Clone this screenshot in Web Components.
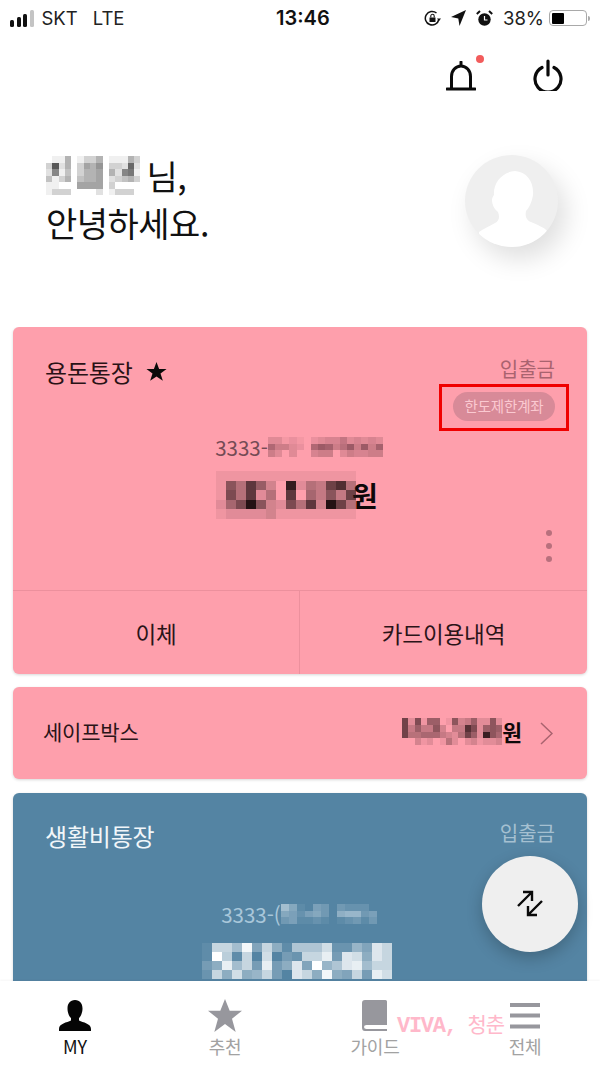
<!DOCTYPE html>
<html lang="ko">
<head>
<meta charset="utf-8">
<title>MY</title>
<style>
html, body { margin: 0; padding: 0; background: #fff; }
body { font-family: "Noto Sans CJK KR", "Noto Sans", sans-serif; color: #111; }
</style>
</head>
<body>
<app-shell>
  <status-bar></status-bar>
  <top-actions></top-actions>
  <greeting-panel>
    <mosaic-block cell-w="6.3" cell-h="6.5" ink="#1c1c1c"
      data="011501335011153/3b25036570332a2/281403556052891/413504556023453/110006666030000/133300002013330"></mosaic-block>
  </greeting-panel>

  <card-list>
    <account-card style="--card-bg:#fe9fac;--title:#2a1216;--kind:#a9636f;--number:#754b55;--line:rgba(130,60,70,.14);--dots:#b8707d">
      <span slot="title">용돈통장</span>
      <svg slot="title-icon" width="21" height="20" viewBox="0 0 24 23"><path d="M12 0l3 8h8.600l-7 5.200 2.700 8.400L12 16.600l-7.300 5 2.700-8.400-7-5.200H9z" fill="#0a0a0a"/></svg>
      <span slot="kind">입출금</span>
      <limit-chip slot="chip">한도제한계좌</limit-chip>
      <span slot="number">3333-</span>
      <mosaic-block slot="number-mask" cell-w="7.2" cell-h="6.7" ink="#6b3843"
        data="3312102344634343/8553208a957a5a59/5303004550354455"></mosaic-block>
      <mosaic-block slot="balance-mask" cell-w="10" cell-h="9.6" ink="#241214"
        data="11111111111111/185b730e254ac5/195b250b06484a/269f83295b3fa5/12222311111111"></mosaic-block>
      <span slot="won">원</span>
      <card-action slot="actions" divider>이체</card-action>
      <card-action slot="actions">카드이용내역</card-action>
    </account-card>

    <save-box>
      <span slot="label">세이프박스</span>
      <mosaic-block slot="mask" cell-w="6.25" cell-h="6.7" ink="#2c1418"
        data="a291770183472282/a474483044c92787/a556664325a72e86/0031201520231223"></mosaic-block>
    </save-box>

    <account-card compact style="--card-bg:#5484a3;--title:#f1f6f9;--kind:#a5c0d1;--number:#a9c7da;--line:transparent;--dots:transparent;margin-top:1px">
      <span slot="title">생활비통장</span>
      <span slot="kind">입출금</span>
      <span slot="number">3333-(</span>
      <mosaic-block slot="number-mask" cell-w="8" cell-h="6.7" ink="#e8f1f6"
        data="851043032220/542453067734/341121012313"></mosaic-block>
      <mosaic-block slot="balance-mask" cell-w="10" cell-h="9" ink="#ffffff"
        data="1aa7e4a51888b2264ca/1f91a0b032aad3cb5ca/35d7a3d35c4f68cd7aa/2a5b56a30ca5e54a3db"></mosaic-block>
    </account-card>
  </card-list>

  <swap-fab></swap-fab>
  <water-mark></water-mark>

  <tab-bar>
    <tab-item active label="MY">
      <svg width="34" height="31" viewBox="0 0 34 31"><path d="M17 0c5 0 7.500 3.600 7.500 8.500 0 4-1.700 8-3.500 9.500v2.600c4 2 12 3 12 8.400v2H1v-2c0-5.400 8-6.400 12-8.400V18c-1.800-1.500-3.500-5.500-3.500-9.500C9.500 3.600 12 0 17 0z" fill="#050505"/></svg>
    </tab-item>
    <tab-item label="추천">
      <svg width="34" height="33" viewBox="0 0 34 33"><path d="M17 0l4.700 11.800H34l-10 7.900L27.700 33 17 25 6.300 33 10 19.700 0 11.800h12.300z" fill="#97979d"/></svg>
    </tab-item>
    <tab-item label="가이드">
      <svg width="26" height="31" viewBox="0 0 26 31"><path d="M3 0h20.500q1.500 0 1.500 1.500V25H4.500Q2 25 2 27t2.500 2H25v2H3q-3 0-3-3.500V3q0-3 3-3z" fill="#97979d"/></svg>
    </tab-item>
    <tab-item label="전체">
      <svg width="30" height="26" viewBox="0 0 30 26"><path d="M0 0h30v4H0zM0 10.500h30v4H0zM0 21.500h30v4H0z" fill="#97979d"/></svg>
    </tab-item>
  </tab-bar>
</app-shell>

<script>
function define(name, html, extra) {
    const template = document.createElement('template');
    template.innerHTML = html;
    customElements.define(name, class extends HTMLElement {
        constructor() {
            super();
            this.attachShadow({ mode: 'open' }).appendChild(template.content.cloneNode(true));
        }
        connectedCallback() {
            if (extra) extra.call(this);
        }
    });
}

define('app-shell', `
<style>
:host { display: flex; flex-direction: column; position: relative; width: 600px; height: 1068px; overflow: hidden; background: #fff; }
</style>
<slot></slot>`);

define('status-bar', `
<style>
:host { display: flex; align-items: center; height: 36px; padding: 0 10px; box-sizing: border-box; font: 400 18.500px Inter, "Liberation Sans", sans-serif; color: #222; position: relative; flex: none; }
.signal { display: flex; align-items: flex-end; gap: 2.500px; height: 18px; margin-right: 8px; }
.signal i { display: block; width: 4px; border-radius: 1.500px; background: #111; }
.lte { margin-left: 15px; }
.time { position: absolute; left: 276px; font-weight: 600; font-size: 20px; color: #111; }
.right { margin-left: auto; display: flex; align-items: center; }
.pct { margin: 0 5px 0 10px; }
.battery { display: flex; width: 38px; height: 16px; box-sizing: border-box; border: 1.500px solid #a9a9a9; border-radius: 4px; padding: 1.500px; }
.battery i { display: block; width: 12px; background: #000; border-radius: 1px; }
.nub { width: 2px; height: 5px; margin-left: 1px; background: #aaa; border-radius: 0 2px 2px 0; }
</style>
<div class="signal"><i style="height:7px"></i><i style="height:10px"></i><i style="height:13px"></i><i style="height:17px;background:#c4c4c4"></i></div>
<span>SKT</span><span class="lte">LTE</span>
<span class="time">13:46</span>
<div class="right">
  <svg width="17" height="17" viewBox="0 0 17 17" style="margin-right:10px"><path d="M14.800 9.500A6.800 6.800 0 1 1 12.500 3" fill="none" stroke="#111" stroke-width="1.500"/><path d="M13 8.500l2 2.500 2-2.500z" fill="#111"/><rect x="5.500" y="7.500" width="6" height="4.500" fill="#111"/><path d="M6.800 7.500V6a1.700 1.700 0 0 1 3.400 0v1.500" fill="none" stroke="#111" stroke-width="1.100"/></svg>
  <svg width="15" height="16" viewBox="0 0 15 16" style="margin-right:10px"><path d="M15 0L8.500 16 7.300 8.500 0 7z" fill="#111"/></svg>
  <svg width="17" height="17" viewBox="0 0 17 17"><circle cx="8.500" cy="9.500" r="6.200" fill="#111"/><path d="M8.500 6v4h3" fill="none" stroke="#fff" stroke-width="1.200"/><path d="M.8 4L4 1M16.200 4L13 1" stroke="#111" stroke-width="2"/></svg>
  <span class="pct">38%</span>
  <div class="battery"><i></i></div><div class="nub"></div>
</div>`);

define('top-actions', `
<style>
:host { display: flex; align-items: center; justify-content: flex-end; height: 80px; flex: none; }
.bell { position: relative; display: flex; margin-right: 57px; }
.dot { position: absolute; left: 30px; top: -6px; width: 8px; height: 8px; border-radius: 50%; background: #f25c5c; }
.power { display: flex; margin: 0 37px 2px 0; }
</style>
<div class="bell">
  <svg width="30" height="30" viewBox="0 0 30 30"><path d="M1 28h28M5.500 28V15.500a9.500 10.500 0 0 1 19 0V28M15 5V1" fill="none" stroke="#0a0a0a" stroke-width="3" stroke-linecap="round"/></svg>
  <span class="dot"></span>
</div>
<div class="power">
  <svg width="30" height="32" viewBox="0 0 30 32"><path d="M9 8.500a13 13 0 1 0 12 0" fill="none" stroke="#0a0a0a" stroke-width="3.200" stroke-linecap="round"/><path d="M15 2v14" stroke="#0a0a0a" stroke-width="3.200" stroke-linecap="round"/></svg>
</div>`);

define('greeting-panel', `
<style>
:host { display: flex; justify-content: space-between; height: 211px; padding: 39px 42px 0 46px; box-sizing: border-box; flex: none; }
.text { font-size: 34px; line-height: 47px; font-weight: 400; color: #111; letter-spacing: -.5px; margin-top: -3px; }
.line { display: flex; align-items: center; height: 47px; }
.line span { margin-left: 6px; }
.avatar { width: 93px; height: 92px; border-radius: 50%; background: #efefef; box-shadow: 8px 12px 26px rgba(0,0,0,.13); overflow: hidden; flex: none; }
.avatar svg { display: block; }
</style>
<div class="text">
  <div class="line"><slot></slot><span>님,</span></div>
  <div>안녕하세요.</div>
</div>
<div class="avatar">
  <svg width="93" height="92" viewBox="0 0 93 92"><path d="M50 16c12 1 19 11 18 24-1 7-4 13-7 16-1 5 0 9 5 11 6 3 13 5 16 9v16H14V77c4-3 11-6 16-9 4-2 5-6 3-11-4-3-6-8-6-12 0-2 1-4 2-5-1-12 8-23 21-24z" fill="#fff"/></svg>
</div>`);

define('card-list', `
<style>
:host { display: flex; flex-direction: column; gap: 13px; flex: 1 1 0; min-height: 0; overflow: hidden; padding: 0 13px; }
</style>
<slot></slot>`);

define('account-card', `
<style>
:host { display: block; position: relative; flex: none; height: 347px; background: var(--card-bg); border-radius: 6px; box-shadow: 0 1px 3px rgba(0,0,0,.16); }
:host([compact]) { height: 240px; }
.head { display: flex; justify-content: space-between; padding: 26px 32px 0 32px; }
:host([compact]) .head { padding-top: 24px; }
.title { display: flex; align-items: center; gap: 13px; font-size: 24px; line-height: 38px; color: var(--title); letter-spacing: -.2px; }
.kind { text-align: right; font-size: 20px; line-height: 32px; color: var(--kind); }
.chip { display: flex; justify-content: flex-end; height: 29px; margin-top: 1px; padding-right: 32px; }
.number { display: flex; justify-content: center; align-items: center; height: 30px; margin-top: 11px; padding-right: 2px; font-size: 20.500px; color: var(--number); }
:host([compact]) .number { margin-top: 14px; }
.balance { display: flex; justify-content: center; align-items: center; height: 56px; margin-top: 5px; padding-right: 6px; }
:host([compact]) .balance { align-items: flex-start; margin-top: 14px; height: 36px; }
::slotted([slot=won]) { font-size: 28px; font-weight: 700; color: #0e0809; margin-left: -4px; }
.dots { position: absolute; right: 35px; top: 203px; display: flex; flex-direction: column; gap: 7px; }
.dots i { width: 6px; height: 6px; border-radius: 50%; background: var(--dots); }
.actions { display: flex; box-sizing: border-box; height: 84px; margin-top: 67px; border-top: 1px solid var(--line); }
:host([compact]) .actions { display: none; }
</style>
<div class="head">
  <div class="title"><slot name="title"></slot><slot name="title-icon"></slot></div>
  <div class="kind"><slot name="kind"></slot></div>
</div>
<div class="chip"><slot name="chip"></slot></div>
<div class="number"><slot name="number"></slot><slot name="number-mask"></slot></div>
<div class="balance"><slot name="balance-mask"></slot><slot name="won"></slot></div>
<div class="dots"><i></i><i></i><i></i></div>
<div class="actions"><slot name="actions"></slot></div>`);

define('limit-chip', `
<style>
:host { display: block; position: relative; }
.pill { height: 29px; line-height: 28px; border-radius: 15px; background: #d88a98; color: #fbc9d1; font-size: 14.500px; white-space: nowrap; box-sizing: border-box; width: 102px; text-align: center; letter-spacing: -.2px; }
.mark { position: absolute; left: -14px; right: -14px; top: -8px; bottom: -10px; border: 3px solid #f00000; box-sizing: border-box; }
</style>
<div class="pill"><slot></slot></div>
<div class="mark"></div>`);

define('card-action', `
<style>
:host { display: flex; flex: 1 1 0; align-items: center; justify-content: center; font-size: 22.500px; color: #2a1418; box-sizing: border-box; letter-spacing: -.1px; }
:host([divider]) { flex: 0 0 287px; border-right: 1px solid var(--line); }
</style>
<slot></slot>`);

define('save-box', `
<style>
:host { display: flex; align-items: center; flex: none; height: 92px; padding: 0 34px 0 30px; box-sizing: border-box; background: #fe9fac; border-radius: 6px; box-shadow: 0 1px 3px rgba(0,0,0,.16); }
.label { font-size: 21px; color: #2a1418; letter-spacing: -.2px; margin-bottom: 4px; }
.amount { margin-left: auto; display: flex; align-items: center; margin-bottom: 3px; }
.won { font-size: 21.500px; font-weight: 700; color: #0e0809; }
svg { margin-left: 18px; }
</style>
<span class="label"><slot name="label"></slot></span>
<div class="amount"><slot name="mask"></slot><span class="won">원</span></div>
<svg width="13" height="23" viewBox="0 0 13 23"><path d="M1 1l11 10.500L1 22" fill="none" stroke="#a9636f" stroke-width="1.500"/></svg>`);

define('mosaic-block', `
<style>
:host { display: inline-grid; flex: none; filter: blur(.4px); }
span { display: block; }
</style>`, function () {
    const rows = (this.getAttribute('data') || '').split('/');
    const w = this.getAttribute('cell-w');
    const h = this.getAttribute('cell-h');
    const ink = this.getAttribute('ink') || '#000';
    const cols = Math.max(...rows.map(r => r.length));
    this.style.gridTemplateColumns = `repeat(${cols}, ${w}px)`;
    this.style.gridAutoRows = `${h}px`;
    rows.forEach(row => {
        for (let i = 0; i < cols; i++) {
            const cell = document.createElement('span');
            cell.style.background = ink;
            cell.style.opacity = parseInt(row[i] || '0', 16) / 15;
            this.shadowRoot.appendChild(cell);
        }
    });
});

define('swap-fab', `
<style>
:host { position: absolute; left: 482px; top: 856px; width: 96px; height: 96px; border-radius: 50%; background: #efefef; box-shadow: 0 6px 16px rgba(0,0,0,.22); display: flex; align-items: center; justify-content: center; }
</style>
<svg width="28" height="28" viewBox="0 0 28 28"><path d="M2 16L15 3M7 2h9v9M26 11L13 24M21 25h-9v-9" fill="none" stroke="#0a0a0a" stroke-width="2.400"/></svg>`);

define('water-mark', `
<style>
:host { position: absolute; left: 397px; top: 1008px; display: flex; align-items: baseline; gap: 11px; color: #ffb8ca; font: 700 22px "Liberation Mono", "Noto Sans CJK KR", monospace; letter-spacing: -1.300px; z-index: 2; }
.ko { font-size: 21px; font-weight: 400; letter-spacing: -1px; font-family: "Noto Sans CJK KR", sans-serif; }
</style>
<span>VIVA,</span><span class="ko">청춘</span>`);

define('tab-bar', `
<style>
:host { display: flex; flex: none; height: 87px; background: #fff; box-shadow: 0 -1px 2px rgba(0,0,0,.04); position: relative; }
::slotted(tab-item) { flex: 1 1 0; }
</style>
<slot></slot>`);

define('tab-item', `
<style>
:host { display: flex; flex-direction: column; align-items: center; color: #a2a2a2; }
:host([active]) { color: #111; }
.icon { display: flex; align-items: center; justify-content: center; height: 35px; margin-top: 17px; }
.label { font-size: 18px; line-height: 26px; letter-spacing: -.2px; }
</style>
<div class="icon"><slot></slot></div>
<div class="label"></div>`, function () {
    this.shadowRoot.querySelector('.label').textContent = this.getAttribute('label');
});
</script>
</body>
</html>
